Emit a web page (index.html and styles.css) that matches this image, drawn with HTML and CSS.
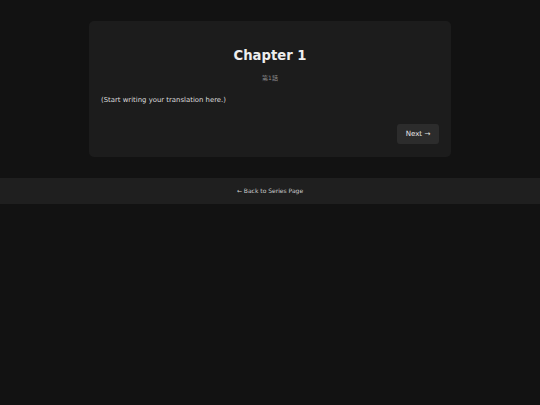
FILE: index.html
```html
<!DOCTYPE html>
<html lang="en">
<head>
<meta charset="utf-8">
<title>Chapter 1</title>
<link rel="stylesheet" href="styles.css">
</head>
<body>
<main class="page">
  <article class="card">
    <h1 class="title">Chapter 1</h1>
    <div class="subtitle">第1話</div>
    <p class="content">(Start writing your translation here.)</p>
    <nav class="chapter-nav">
      <a class="btn" href="#">Next →</a>
    </nav>
  </article>
</main>
<footer class="footer">
  <a class="back" href="#">← Back to Series Page</a>
</footer>
</body>
</html>
```

FILE: styles.css
```css
html, body {
  margin: 0;
  padding: 0;
  background: #121212;
  color: #e0e0e0;
  font-family: "DejaVu Sans", "Noto Sans CJK JP", sans-serif;
}

.page {
  padding-top: 21px;
}

.card {
  width: 362px;
  box-sizing: border-box;
  margin: 0 auto;
  background: #1c1c1c;
  border-radius: 5px;
  padding: 12px 12px 13px;
  display: flex;
  flex-direction: column;
}

.title {
  margin: 15px 0 0;
  font-size: 13.2px;
  line-height: 15.4px;
  font-weight: bold;
  text-align: center;
  color: #eeeeee;
}

.subtitle {
  margin-top: 11px;
  font-size: 6px;
  line-height: 8px;
  text-align: center;
  color: #8a8a8a;
}

.content {
  margin: 12.5px 0 0;
  font-size: 6.9px;
  line-height: 10px;
  color: #dddddd;
}

.chapter-nav {
  display: flex;
  justify-content: flex-end;
  margin-top: 19.5px;
}

.btn {
  display: block;
  width: 42px;
  height: 20px;
  box-sizing: border-box;
  background: #2c2c2c;
  border-radius: 3px;
  color: #e6e6e6;
  text-decoration: none;
  font-size: 7.1px;
  line-height: 20px;
  text-align: center;
}

.footer {
  margin-top: 21px;
  height: 26px;
  background: #1f1f1f;
  display: flex;
  align-items: center;
  justify-content: center;
}

.back {
  font-size: 6px;
  line-height: 8px;
  color: #cccccc;
  text-decoration: none;
}
```
